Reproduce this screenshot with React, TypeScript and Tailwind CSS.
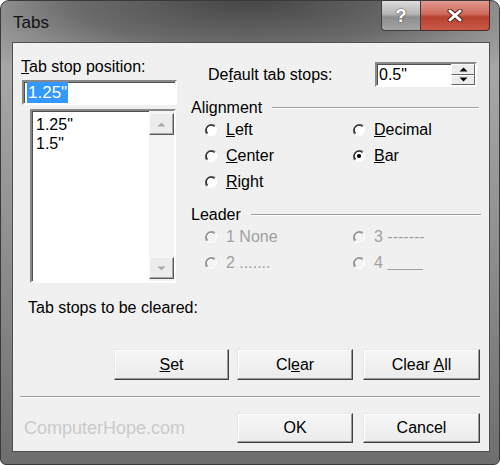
import React from "react";

const font = { fontFamily: '"Liberation Sans", Arial, sans-serif' };

function Radio({ checked = false, disabled = false }: { checked?: boolean; disabled?: boolean }) {
  return (
    <svg width="14" height="14" viewBox="0 0 14 14" className="shrink-0">
      <circle cx="7" cy="7" r="6" fill={disabled ? "#f4f4f4" : "#ffffff"} />
      <path d="M2.8 11.2 A6 6 0 0 1 11.2 2.8" stroke={disabled ? "#a8a8a8" : "#6a6a6a"} strokeWidth="1.3" fill="none" />
      <path d="M3.6 10.4 A4.8 4.8 0 0 1 10.4 3.6" stroke={disabled ? "#8c8c8c" : "#2a2a2a"} strokeWidth="1.3" fill="none" />
      <path d="M11.2 2.8 A6 6 0 0 1 2.8 11.2" stroke="#ffffff" fill="none" />
      {checked && <circle cx="7" cy="7" r="2.1" fill="#000" />}
    </svg>
  );
}

function Choice({
  label,
  checked,
  disabled,
}: {
  label: React.ReactNode;
  checked?: boolean;
  disabled?: boolean;
}) {
  return (
    <div className="flex h-[26px] items-center">
      <Radio checked={checked} disabled={disabled} />
      <span className={`ml-[8px] ${disabled ? "text-[#a0a0a0]" : "text-black"}`}>{label}</span>
    </div>
  );
}

function GroupLabel({ text }: { text: string }) {
  return (
    <div className="flex h-[18px] items-center">
      <span>{text}</span>
      <div className="ml-[10px] flex-1">
        <div className="h-px bg-[#a0a0a0]" />
        <div className="h-px bg-white" />
      </div>
    </div>
  );
}

function Btn({ w, children }: { w: string; children: React.ReactNode }) {
  return (
    <button
      className={`${w} flex h-full items-center justify-center border border-t-[#e8e8e8] border-l-[#e8e8e8] border-b-[#404040] border-r-[#404040] bg-[linear-gradient(to_bottom,#f6f6f6,#ebebeb)] shadow-[inset_-1px_-1px_0_#9a9a9a,inset_1px_1px_0_#ffffff] text-black`}
    >
      <span>{children}</span>
    </button>
  );
}

function Arrow({ up, color }: { up: boolean; color: string }) {
  return (
    <svg width="9" height="5" viewBox="0 0 9 5">
      <path d={up ? "M0.5 4.5 L4.5 0.5 L8.5 4.5 Z" : "M0.5 0.5 L4.5 4.5 L8.5 0.5 Z"} fill={color} />
    </svg>
  );
}

function ScrollBtn({ up }: { up: boolean }) {
  return (
    <div className="flex h-[22px] w-full items-center justify-center border border-t-[#f8f8f8] border-l-[#f8f8f8] border-b-[#5a5a5a] border-r-[#5a5a5a] bg-[#ececec] shadow-[inset_-1px_-1px_0_#a8a8a8]">
      <Arrow up={up} color="#a8a8a8" />
    </div>
  );
}

export default function App() {
  return (
    <div
      style={font}
      className="flex h-[465px] w-[500px] flex-col rounded-t-[9px] rounded-b-[6px] border border-[#3a3a3a] bg-[radial-gradient(ellipse_360px_90px_at_50%_0%,#464646,#6c6c6c_50%,transparent),linear-gradient(to_bottom,#c8c8c8,#a9a9a9_12%,#8a8a8a_60%,#6e6e6e)] text-[16px] leading-[18px]"
    >
      {/* title bar */}
      <div className="flex h-[41px] shrink-0 items-start">
        <div className="pl-[12px] pt-[12px] text-[17px] leading-[20px] text-[#111]">Tabs</div>
        <div className="ml-auto mr-[9px] flex h-[30px]">
          <div className="flex w-[40px] items-center justify-center rounded-bl-[4px] border border-t-0 border-[#3c3c3c] bg-[linear-gradient(to_bottom,#dcdcdc,#b4b4b4_45%,#8e8e8e_55%,#a4a4a4)] text-[18px] font-bold text-white [text-shadow:0_0_2px_#333]">
            ?
          </div>
          <div className="flex w-[69px] items-center justify-center rounded-br-[4px] border border-l-0 border-t-0 border-[#4a2a26] bg-[linear-gradient(to_bottom,#e29a90,#cf6a5c_45%,#b8412f_55%,#c95a48)]">
            <svg width="16" height="13" viewBox="0 0 16 13">
              <path d="M3 2 L13 11 M13 2 L3 11" stroke="#5a2620" strokeWidth="5" strokeLinecap="round" />
              <path d="M3 2 L13 11 M13 2 L3 11" stroke="#ffffff" strokeWidth="3" strokeLinecap="round" />
            </svg>
          </div>
        </div>
      </div>

      {/* client area */}
      <div className="mb-[12px] ml-[11px] mr-[9px] flex flex-1 flex-col border border-[#505050] bg-[#f0f0f0] text-black">
        <div className="flex">
          {/* left column */}
          <div className="w-[178px] shrink-0 pl-[8px] pt-[15px]">
            <div className="h-[18px]">
              <u>T</u>ab stop position:
            </div>
            <div className="ml-[1px] mt-[4px] flex h-[25px] w-[155px] items-center border-2 border-t-[#888] border-l-[#888] border-b-white border-r-white bg-white pl-[3px] shadow-[inset_1px_1px_0_#505050]">
              <span className="bg-[#3399ff] px-[1px] text-[17px] leading-[21px] text-white">1.25"</span>
            </div>
            <div className="ml-[9px] mt-[4px] flex h-[174px] w-[146px] border-2 border-t-[#888] border-l-[#888] border-b-white border-r-white bg-white shadow-[inset_1px_1px_0_#505050]">
              <div className="flex-1 pl-[4px] pt-[4px] leading-[19px]">
                <div>1.25"</div>
                <div>1.5"</div>
              </div>
              <div className="flex w-[25px] flex-col justify-between bg-[#f3f3f3] py-[2px]">
                <ScrollBtn up />
                <ScrollBtn up={false} />
              </div>
            </div>
          </div>

          {/* right column */}
          <div className="w-[292px] pt-[19px]">
            <div className="flex h-[25px] items-center pl-[17px] pr-[6px]">
              <span>
                De<u>f</u>ault tab stops:
              </span>
              <div className="ml-auto flex h-full w-[102px] border-2 border-t-[#888] border-l-[#888] border-b-white border-r-white bg-white shadow-[inset_1px_1px_0_#505050]">
                <div className="flex flex-1 items-center pl-[2px]">0.5"</div>
                <div className="flex w-[24px] flex-col">
                  <div className="flex flex-1 items-center justify-center border border-t-white border-l-white border-b-[#666] border-r-[#666] bg-[#ececec]">
                    <Arrow up color="#000" />
                  </div>
                  <div className="flex flex-1 items-center justify-center border border-t-white border-l-white border-b-[#666] border-r-[#666] bg-[#ececec]">
                    <Arrow up={false} color="#000" />
                  </div>
                </div>
              </div>
            </div>

            <div className="mt-[12px] pr-[4px]">
              <GroupLabel text="Alignment" />
            </div>
            <div className="grid grid-cols-[148px_1fr] pl-[13px]">
              <Choice label={<><u>L</u>eft</>} />
              <Choice label={<><u>D</u>ecimal</>} />
              <Choice label={<><u>C</u>enter</>} />
              <Choice label={<><u>B</u>ar</>} checked />
              <Choice label={<><u>R</u>ight</>} />
              <div />
            </div>

            <div className="mt-[11px] pr-[2px]">
              <GroupLabel text="Leader" />
            </div>
            <div className="grid grid-cols-[148px_1fr] pl-[13px]">
              <Choice label="1 None" disabled />
              <Choice label="3 -------" disabled />
              <Choice label="2 ......." disabled />
              <Choice label={<>4 <span className="underline">&nbsp;&nbsp;&nbsp;&nbsp;&nbsp;&nbsp;&nbsp;&nbsp;</span></>} disabled />
            </div>
          </div>
        </div>

        <div className="mt-[16px] h-[18px] pl-[15px]">Tab stops to be cleared:</div>

        <div className="mt-[32px] flex h-[31px] justify-end pr-[9px]">
          <Btn w="w-[115px]">
            <u>S</u>et
          </Btn>
          <div className="w-[8px]" />
          <Btn w="w-[116px]">
            Cl<u>e</u>ar
          </Btn>
          <div className="w-[10px]" />
          <Btn w="w-[117px]">
            Clear <u>A</u>ll
          </Btn>
        </div>

        <div className="mt-[16px] pl-[7px] pr-[9px]">
          <div className="h-px bg-[#a0a0a0]" />
          <div className="h-px bg-white" />
        </div>

        <div className="mt-[15px] flex h-[30px] items-center pr-[9px]">
          <span className="pl-[11px] text-[18px] text-[#cacaca]">ComputerHope.com</span>
          <div className="ml-auto flex h-full">
            <Btn w="w-[116px]">OK</Btn>
            <div className="w-[10px]" />
            <Btn w="w-[117px]">Cancel</Btn>
          </div>
        </div>
      </div>
    </div>
  );
}
